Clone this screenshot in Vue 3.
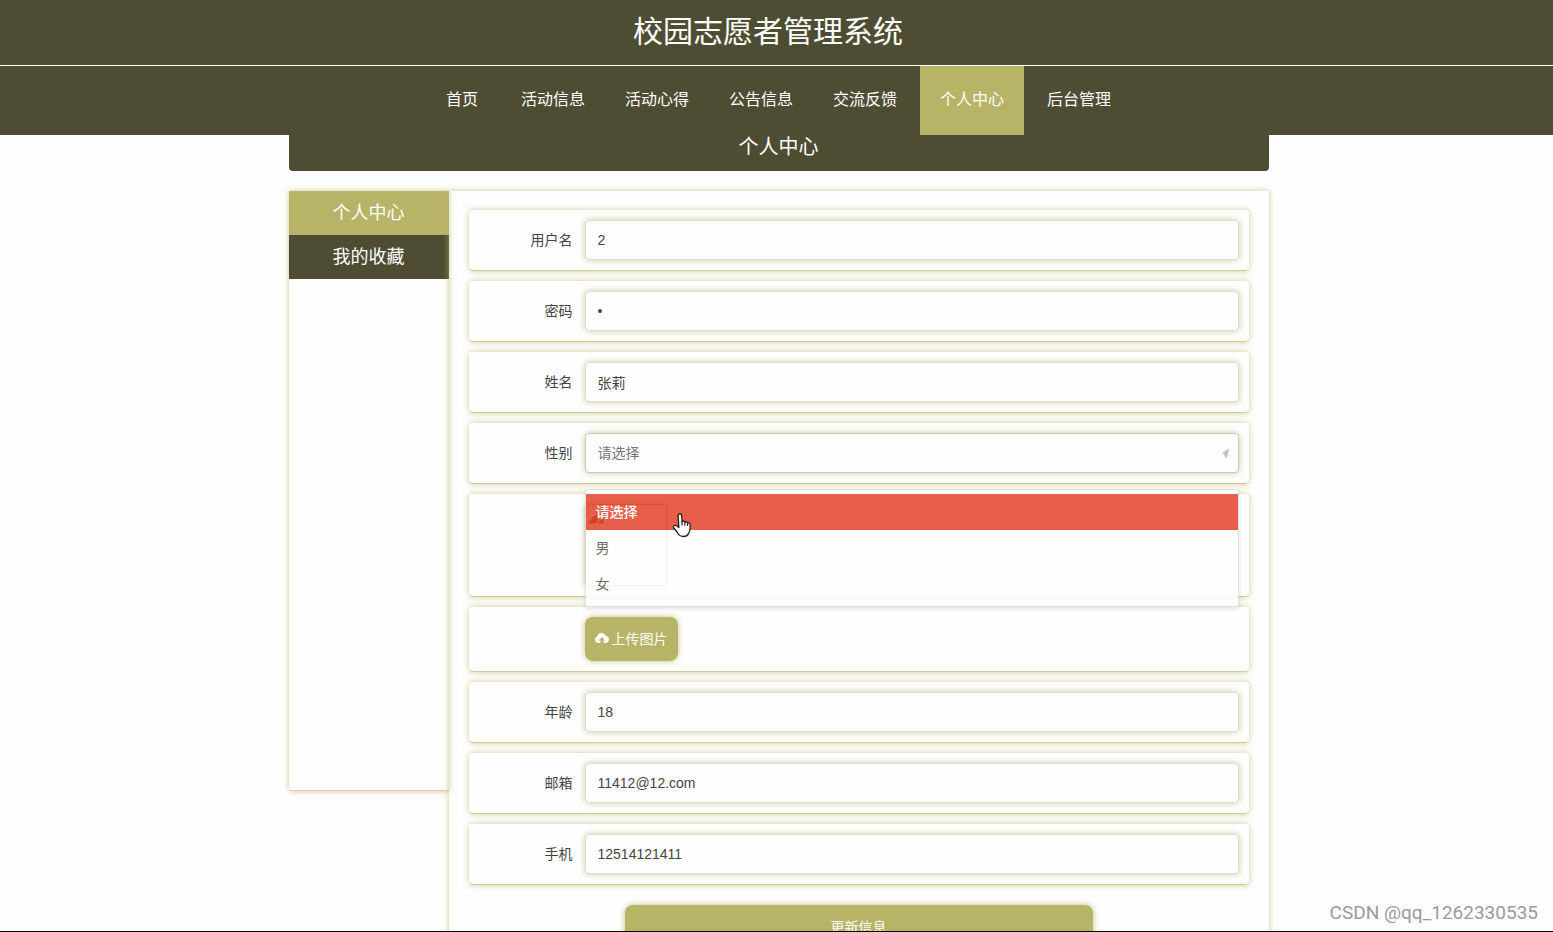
<script setup>
import { reactive } from 'vue'

const nav = [
  { text: '首页', cls: 'home' },
  { text: '活动信息' },
  { text: '活动心得' },
  { text: '公告信息' },
  { text: '交流反馈' },
  { text: '个人中心', cls: 'current' },
  { text: '后台管理' },
]

const form = reactive({
  username: '2',
  password: '2',
  name: '张莉',
  gender: '',
  age: '18',
  email: '11412@12.com',
  phone: '12514121411',
})

const top = [
  { key: 'username', label: '用户名', type: 'text' },
  { key: 'password', label: '密码', type: 'password' },
  { key: 'name', label: '姓名', type: 'text' },
]
const bottom = [
  { key: 'age', label: '年龄', type: 'text' },
  { key: 'email', label: '邮箱', type: 'text' },
  { key: 'phone', label: '手机', type: 'text' },
]
</script>

<template>
  <div class="page">
    <header class="header">
      <h1 class="title">校园志愿者管理系统</h1>
      <nav class="nav">
        <a v-for="n in nav" :key="n.text" href="#" :class="n.cls">{{ n.text }}</a>
      </nav>
    </header>

    <div class="wrap">
      <h2 class="banner">个人中心</h2>
      <div class="columns">
        <aside class="side">
          <a href="#" class="on">个人中心</a>
          <a href="#">我的收藏</a>
        </aside>

        <form class="main" @submit.prevent>
          <div v-for="f in top" :key="f.key" class="row">
            <label class="label" :for="f.key">{{ f.label }}</label>
            <input :id="f.key" v-model="form[f.key]" class="field" :type="f.type" autocomplete="off" />
          </div>

          <div class="row">
            <label class="label" for="gender">性别</label>
            <div class="picker">
              <select id="gender" v-model="form.gender" class="field select">
                <option value="">请选择</option>
                <option value="男">男</option>
                <option value="女">女</option>
              </select>
              <svg class="arrow" viewBox="0 0 8 12"><path d="M7.500 0.500 L0.500 4.500 L4.500 11 Z" fill="#c2c2c2" /></svg>
              <ul class="menu">
                <li class="hover">请选择</li>
                <li>男</li>
                <li>女</li>
              </ul>
              <svg class="pointer" viewBox="0 0 20 26">
                <path
                  d="M6.800 2.200 C8 1.200 9.600 2 9.700 3.600 L10 9.500 C11 8.600 12.500 9 12.900 10 C14 9.400 15.300 9.900 15.600 10.900 C17 10.500 18.200 11.500 18.200 13 L18 17.500 C18 19 17 20.500 16.500 21.600 C15.500 23.600 13.500 24.500 11.500 24.500 C9 24.500 7.500 23.800 6.300 22 C5 20 3.500 18 1.900 16 C1.300 15.200 1.300 13.900 2.300 13.500 C3.600 13 5.200 13.800 6.900 15.600 L6.100 3.800 C6.100 3.100 6.300 2.600 6.800 2.200 Z"
                  fill="#fff" stroke="#222" stroke-width="1.300" stroke-linejoin="round" />
                <path d="M10 9.500 V13.500 M12.900 10 V13.800 M15.600 10.900 V14" fill="none" stroke="#222" stroke-width="1.200" />
              </svg>
            </div>
          </div>

          <div class="row">
            <span class="label"></span>
            <div class="photo">
              <svg viewBox="0 0 16 18" width="16" height="18">
                <path d="M0.500 0.500 H15.500 V17.500 H0.500 Z" fill="none" stroke="#c9b9ae" />
                <path d="M1 17 C3 12 6 10 9 9 L11 12 L8 17 Z" fill="#4a3408" />
                <path d="M10 17 L15 12 V17 Z" fill="#4a3408" />
              </svg>
            </div>
          </div>

          <div class="row">
            <span class="label"></span>
            <button type="button" class="upload">
              <svg viewBox="0 0 14 12" width="14" height="12">
                <path d="M3.500 11 C1.500 11 0 9.600 0 7.700 C0 6.200 0.900 5 2.200 4.600 C2.300 2.500 4.200 1 6.500 1 C8.400 1 9.900 2 10.500 3.700 C12.600 3.800 14 5.400 14 7.400 C14 9.500 12.500 11 10.500 11 H8.600 V8.500 H10.200 L7 5 L3.800 8.500 H5.400 V11 Z" fill="#fff" />
              </svg>
              <span>上传图片</span>
            </button>
          </div>

          <div v-for="f in bottom" :key="f.key" class="row">
            <label class="label" :for="f.key">{{ f.label }}</label>
            <input :id="f.key" v-model="form[f.key]" class="field" :type="f.type" autocomplete="off" />
          </div>

          <button type="submit" class="submit">更新信息</button>
        </form>
      </div>
    </div>

    <div class="mark">CSDN @qq_1262330535</div>
  </div>
</template>

<style>
html,
body {
  margin: 0;
  background: #fefefe;
}
</style>

<style scoped>
* {
  box-sizing: border-box;
}
.page {
  position: relative;
  height: 100vh;
  overflow: hidden;
  border-bottom: 1px solid #000;
  background: #fefefe;
  font-family: "Liberation Sans", "Noto Sans CJK SC", sans-serif;
  font-size: 14px;
  color: #444;
}
a {
  color: #fff;
  text-decoration: none;
}
.header {
  background: #4e4d33;
}
.title {
  margin: 0;
  padding: 0 17px 1px 0;
  border-bottom: 1px solid #fff;
  color: #fff;
  font-size: 30px;
  font-weight: 400;
  line-height: 64px;
  text-align: center;
}
.nav {
  display: flex;
  justify-content: center;
  padding-left: 4px;
}
.nav a {
  padding: 0 20px 2px;
  font-size: 16px;
  line-height: 67px;
}
.nav .home {
  margin-right: 3px;
}
.nav .current {
  margin: 0 3px;
  background: #b8b467;
}
.wrap {
  max-width: 984px;
  margin: 0 auto;
  padding-left: 4px;
}
.banner {
  margin: 0 0 20px;
  padding-bottom: 12px;
  border-radius: 0 0 4px 4px;
  background: #4e4d33;
  color: #fff;
  font-size: 20px;
  font-weight: 400;
  line-height: 24px;
  text-align: center;
}
.columns {
  display: flex;
  align-items: flex-start;
}
.side {
  width: 160px;
  height: 600px;
  border-bottom: 1px solid #efc9b5;
  box-shadow: 0 0 6px rgba(184, 180, 103, 0.7);
}
.side a {
  display: block;
  background: #4e4d33;
  font-size: 18px;
  line-height: 44px;
  text-align: center;
}
.side .on {
  background: #b8b467;
}
.main {
  flex: 1;
  padding: 19px 20px;
  box-shadow: 0 0 6px rgba(184, 180, 103, 0.7);
}
.row {
  display: flex;
  margin-bottom: 10px;
  padding: 10px;
  border-bottom: 1px solid #cdcb9c;
  border-radius: 4px;
  box-shadow: 0 0 6px rgba(184, 180, 103, 0.7);
}
.label {
  width: 106px;
  padding-right: 12px;
  line-height: 40px;
  text-align: right;
}
.field {
  flex: 1;
  min-width: 0;
  height: 40px;
  padding: 0 12px;
  border: 1px solid #dcdcd8;
  border-radius: 4px;
  outline: none;
  background: #fefefe;
  box-shadow: 0 0 6px rgba(184, 180, 103, 0.7);
  color: #444;
  font: inherit;
}
.picker {
  position: relative;
  display: flex;
  flex: 1;
}
.select {
  appearance: none;
  border-color: #c8c8c8;
  color: #777;
}
.arrow {
  position: absolute;
  top: 15px;
  right: 9px;
  width: 8px;
  height: 12px;
}
.menu {
  position: absolute;
  z-index: 2;
  top: 56px;
  left: 0;
  width: 100%;
  margin: 0;
  padding: 4px 0;
  border: 1px solid #dedede;
  background: #fff;
  box-shadow: 0 2px 4px rgba(0, 0, 0, 0.12);
  list-style: none;
  opacity: 0.85;
}
.menu li {
  padding: 0 10px;
  color: #555;
  line-height: 36px;
}
.menu .hover {
  background: #e4442c;
  color: #fff;
  font-weight: 500;
}
.pointer {
  position: absolute;
  z-index: 3;
  top: 79px;
  left: 87px;
  width: 20px;
  height: 26px;
}
.photo {
  width: 82px;
  height: 82px;
  padding: 1px 2px;
  border: 1px solid #999;
  border-radius: 4px;
  box-shadow: 0 0 6px rgba(184, 180, 103, 0.7);
}
.upload {
  display: flex;
  align-items: center;
  gap: 3px;
  height: 44px;
  padding: 0 10px 2px;
  border: 0;
  border-radius: 8px;
  background: #b8b467;
  box-shadow: 0 0 6px rgba(184, 180, 103, 0.8);
  color: #fff;
  font: inherit;
}
.submit {
  display: block;
  width: 60%;
  height: 44px;
  margin: 20px auto 0;
  padding: 0 0 2px;
  border: 0;
  border-radius: 8px;
  background: #b8b467;
  box-shadow: 0 0 6px rgba(184, 180, 103, 0.8);
  color: #fff;
  font: inherit;
}
.mark {
  position: absolute;
  right: 15px;
  bottom: 6px;
  color: #9a9a9a;
  font-family: Roboto, sans-serif;
  font-size: 19px;
  line-height: 24px;
}
</style>
